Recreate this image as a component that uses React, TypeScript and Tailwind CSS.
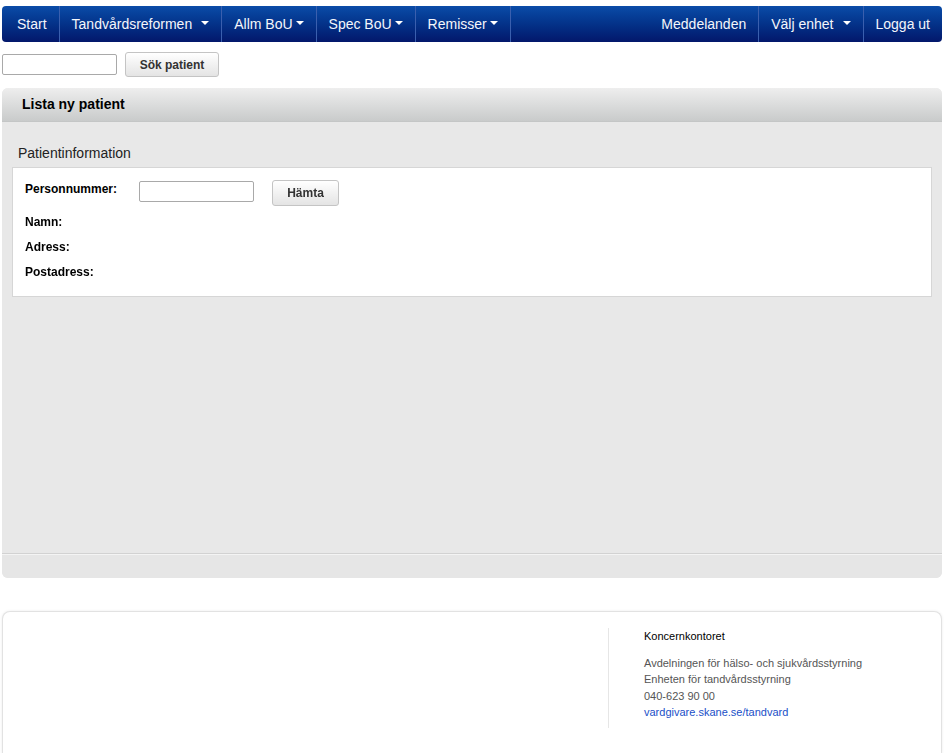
import React from 'react'

const navLeft = [
  { label: 'Start', first: true },
  { label: 'Tandvårdsreformen', caret: true, wide: true },
  { label: 'Allm BoU', caret: true },
  { label: 'Spec BoU', caret: true },
  { label: 'Remisser', caret: true },
]

function Caret({ wide }: { wide?: boolean }) {
  return (
    <span
      className={`inline-block border-x-[4px] border-t-[4px] border-x-transparent border-t-white ${wide ? 'ml-[9px]' : 'ml-[3px]'} mb-[2px]`}
    />
  )
}

function NavItem({ label, caret, wide, first, sep = true }: { label: string; caret?: boolean; wide?: boolean; first?: boolean; sep?: boolean }) {
  return (
    <a
      href="#"
      className={`flex items-center h-full ${first ? 'pl-[15px]' : 'pl-3'} pr-3 text-[#f4f6fb] text-[14px] ${sep ? 'border-r border-[#3a5fae]' : ''}`}
    >
      {label}
      {caret && <Caret wide={wide} />}
    </a>
  )
}

export default function App() {
  return (
    <div className="w-[949px] min-h-[753px] bg-white font-['Liberation_Sans',Arial,sans-serif] text-[#333]">
      <div className="pt-[6px] pl-[2px]">
        {/* top menu */}
        <nav className="flex justify-between w-[940px] h-[36px] rounded-[4px] bg-gradient-to-b from-[#0b4ca8] to-[#03176b]">
          <div className="flex h-full">
            {navLeft.map(n => (
              <NavItem key={n.label} {...n} />
            ))}
          </div>
          <div className="flex h-full">
            <NavItem label="Meddelanden" />
            <NavItem label="Välj enhet" caret wide />
            <NavItem label="Logga ut" sep={false} />
          </div>
        </nav>

        {/* search */}
        <div className="flex items-center gap-[8px] mt-[10px] h-[25px]">
          <input className="w-[115px] h-[21px] border border-[#a9a9a9] rounded-[2px] bg-white outline-none" />
          <button className="w-[94px] h-[25px] text-[12px] font-bold text-[#333] border border-[#c4c4c4] rounded-[3px] bg-gradient-to-b from-[#ffffff] to-[#e4e4e4]">
            Sök patient
          </button>
        </div>

        {/* panel */}
        <div className="mt-[11px] w-[940px] rounded-[6px] bg-[#e8e8e8] overflow-hidden">
          <div className="h-[34px] flex items-center px-[20px] bg-gradient-to-b from-[#eeeeee] to-[#c9cbcb] border-b border-[#c4c6c6]">
            <span className="text-[14px] font-bold text-black">Lista ny patient</span>
          </div>
          <div className="px-[10px] pt-[22px] h-[431px]">
            <div className="text-[14px] text-[#222] pl-[6px] leading-[18px]">Patientinformation</div>
            <div className="mt-[5px] w-[920px] bg-white border border-[#d6d6d6] pt-[13px] pb-[7px] px-[12px] text-[12px] font-bold text-black">
              <div className="flex h-[26px]">
                <div className="w-[114px] leading-4">Personnummer:</div>
                <input
                  autoFocus
                  className="w-[115px] h-[21px] border border-[#a9a9a9] rounded-[2px] outline-none px-[2px] caret-black"
                />
                <button className="ml-[18px] -mt-[1px] w-[67px] h-[26px] text-[12px] font-bold text-[#333] border border-[#c4c4c4] rounded-[3px] bg-gradient-to-b from-[#ffffff] to-[#e4e4e4]">
                  Hämta
                </button>
              </div>
              <div className="mt-[7px] h-[25px] leading-4">Namn:</div>
              <div className="h-[25px] leading-4">Adress:</div>
              <div className="h-[25px] leading-4">Postadress:</div>
            </div>
          </div>
          <div className="h-[25px] border-t border-[#d2d2d2] bg-[#e6e6e6] shadow-[inset_0_1px_0_#f4f4f4]" />
        </div>

        {/* footer */}
        <footer className="mt-[33px] w-[940px] h-[143px] rounded-t-[8px] border border-b-0 border-[#e2e2e2] shadow-[0_0_3px_rgba(0,0,0,0.08)] bg-white flex pt-[16px]">
          <div className="w-[605px]" />
          <div className="border-l border-[#e6e6e6] h-[100px] pl-[35px] text-[11px] leading-[16.5px]">
            <div className="text-black">Koncernkontoret</div>
            <div className="mt-[10px] text-[#555]">Avdelningen för hälso- och sjukvårdsstyrning</div>
            <div className="text-[#555]">Enheten för tandvårdsstyrning</div>
            <div className="text-[#555]">040-623 90 00</div>
            <a href="#" className="text-[#1a4fc8]">vardgivare.skane.se/tandvard</a>
          </div>
        </footer>
      </div>
    </div>
  )
}
